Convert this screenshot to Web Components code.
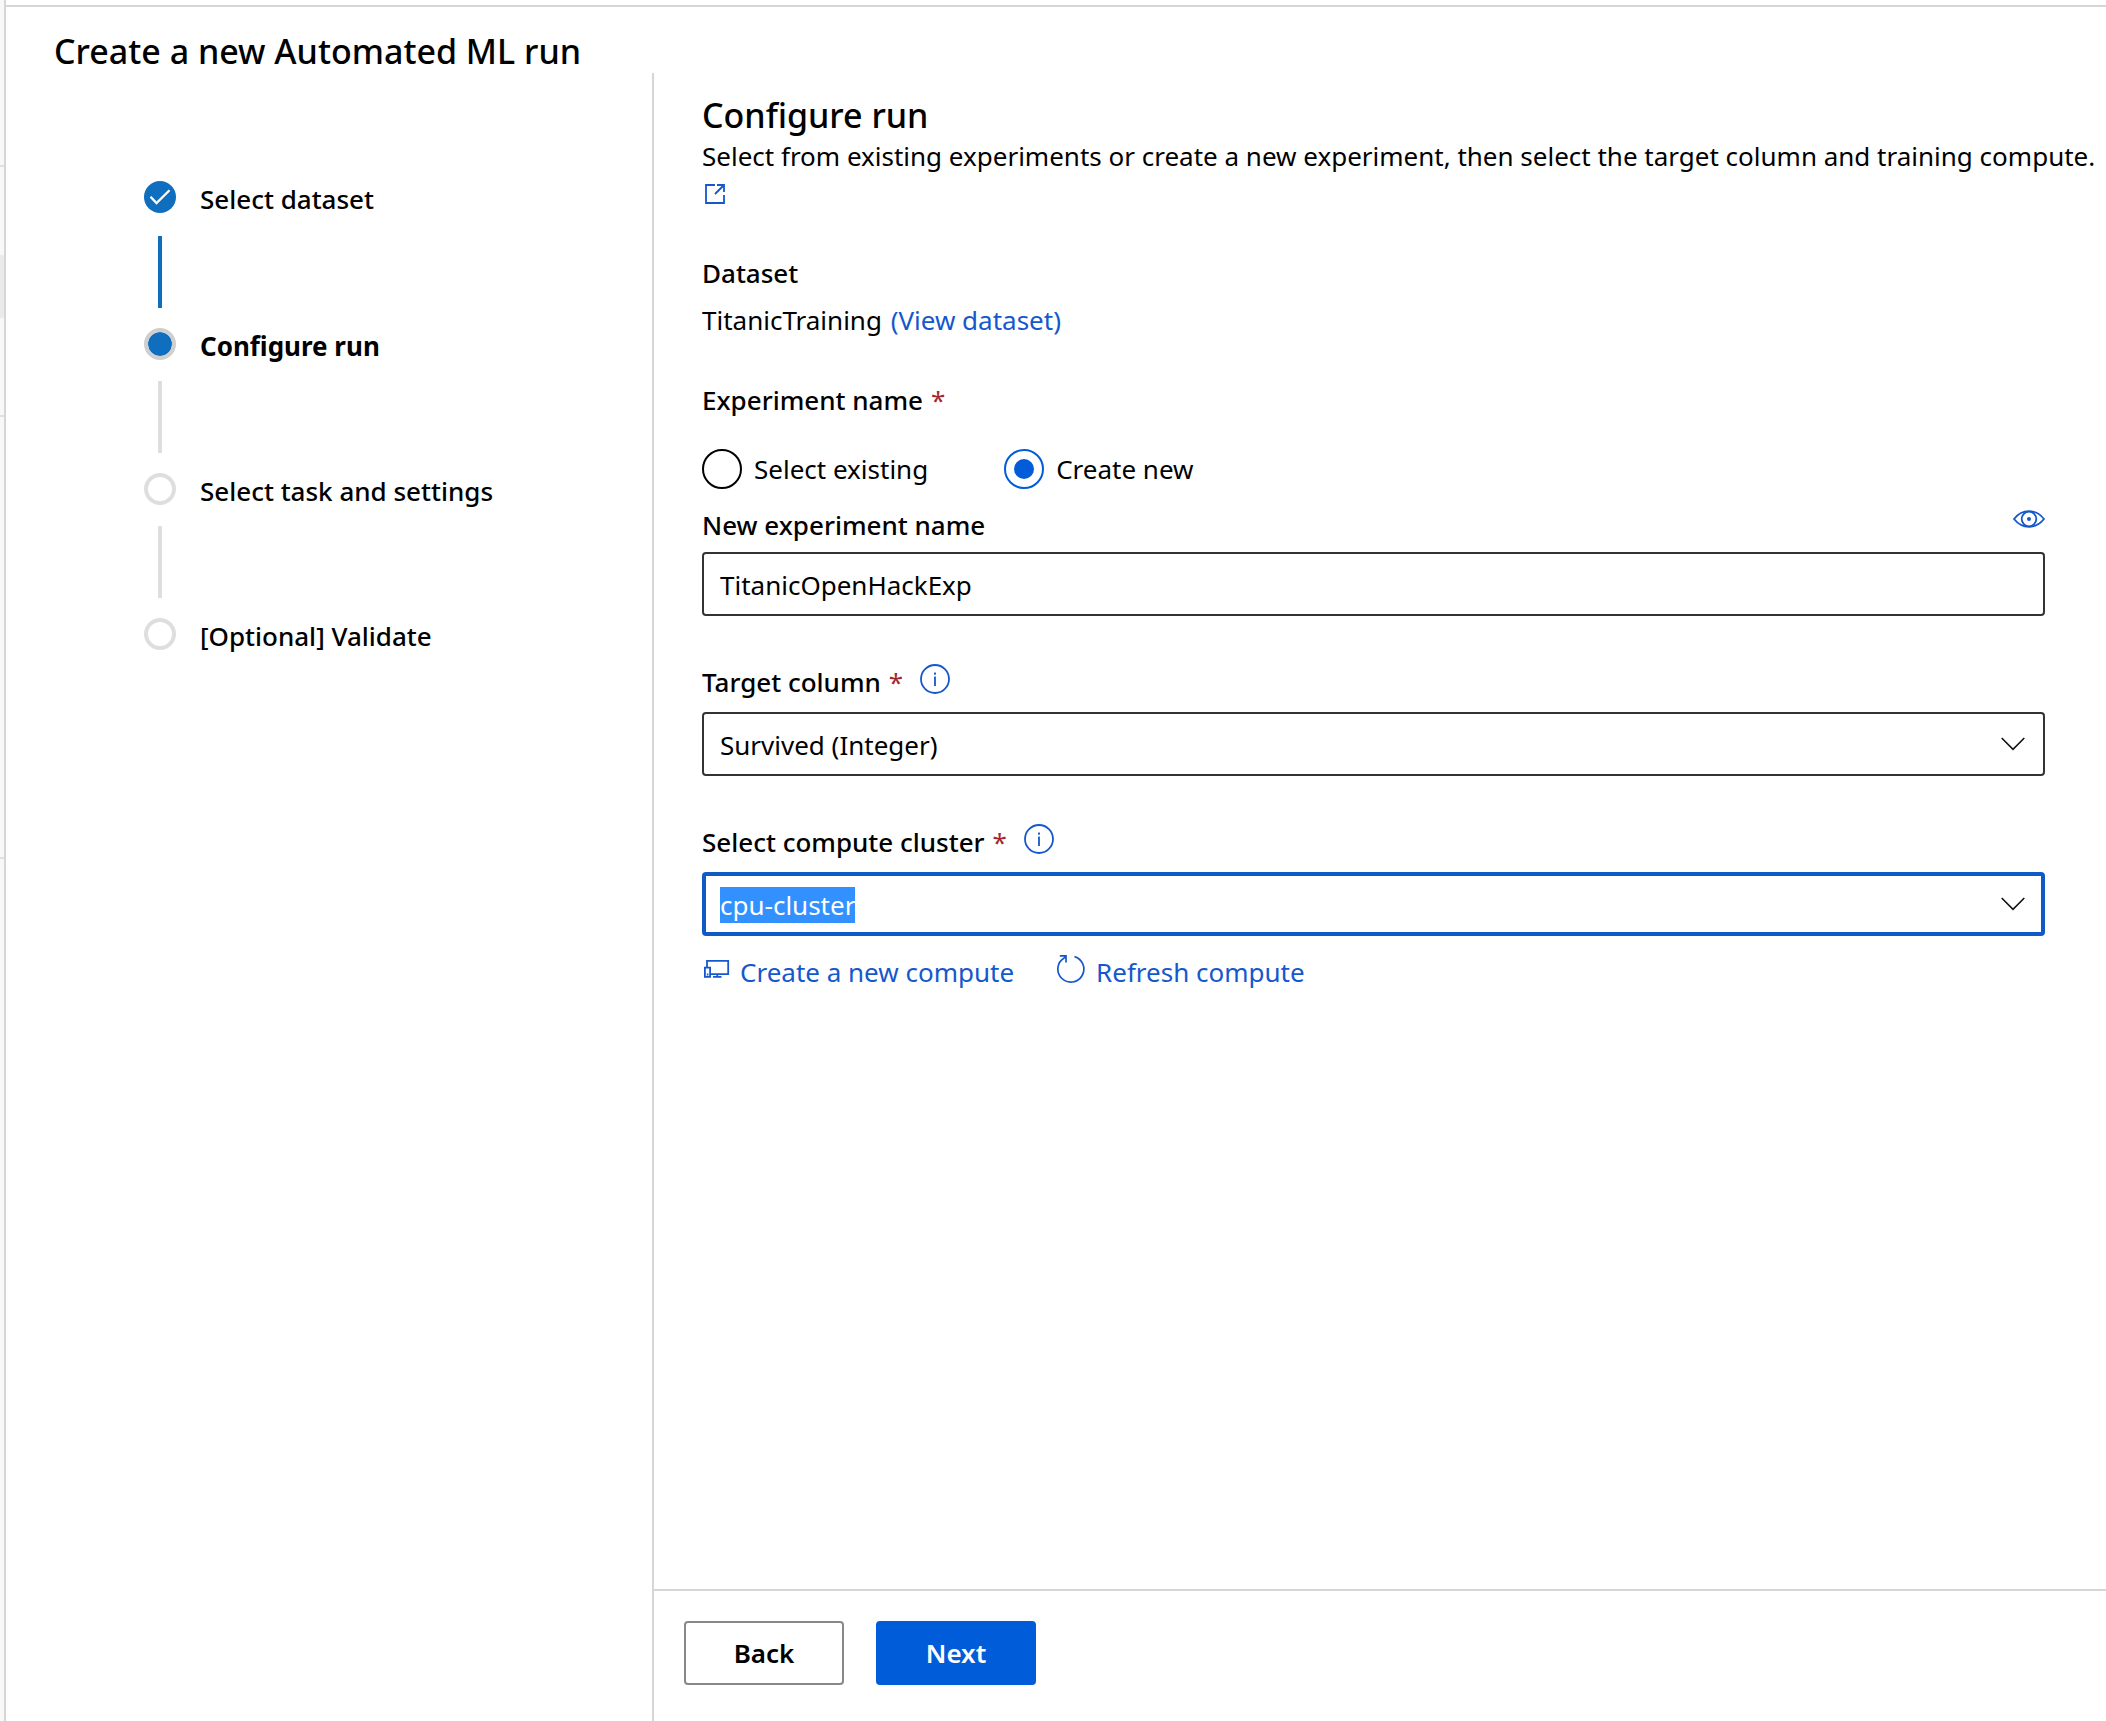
<!DOCTYPE html>
<html lang="en">
<head>
<meta charset="utf-8">
<title>Create a new Automated ML run</title>
<style>
  html, body { margin: 0; height: 100%; }
  body {
    background: #fff;
    color: #000;
    font-family: "Noto Sans", "Open Sans", sans-serif;
    font-size: 26px;
    line-height: 36px;
    --blue: #015cda;
    --link: #1558cc;
    --step: #106ebe;
    --line: #d6d6d6;
    --muted: #dedede;
    --field: #333;
    --required: #a4262c;
  }
</style>
</head>
<body>
<ml-shell>
  <ml-nav-edge slot="nav"></ml-nav-edge>
  <h1 slot="title">Create a new Automated ML run</h1>
  <ml-steps slot="steps">
    <ml-step state="done">Select dataset</ml-step>
    <ml-step state="current">Configure run</ml-step>
    <ml-step>Select task and settings</ml-step>
    <ml-step last>[Optional] Validate</ml-step>
  </ml-steps>
  <ml-run-form></ml-run-form>
  <ml-button slot="actions">Back</ml-button>
  <ml-button slot="actions" primary>Next</ml-button>
</ml-shell>

<script>
const ICONS = {
  open: '<svg width="22" height="22" viewBox="0 0 22 22"><path d="M11 2H2v18h18v-8M20 9V2h-7M20 2l-9 9"/></svg>',
  eye: '<svg width="32" height="18" viewBox="0 0 32 18"><path d="M1 9C5 4 10 1.200 16 1.200S27 4 31 9c-4 5-9 7.800-15 7.800S5 14 1 9z"/><circle cx="16" cy="9" r="7.300"/><circle cx="16" cy="9" r="2" fill="currentColor" stroke="none"/></svg>',
  info: '<svg width="30" height="30" viewBox="0 0 30 30"><circle cx="15" cy="15" r="14"/><path d="M15 12.500v9.500M15 8.500v2.200"/></svg>',
  chevron: '<svg width="24" height="14" viewBox="0 0 24 14"><path d="M.7 1L12 12.300 23.300 1" stroke-width="1.600"/></svg>',
  compute: '<svg width="28" height="20" viewBox="0 0 28 20"><path d="M5 8V1.900h21.200v13.200H8.500M2.900 8.600h5.200v9.300H2.900zM4.800 15.500h1.600M11 17.900h8.500M15.300 15.100v2.800"/></svg>',
  refresh: '<svg width="30" height="30" viewBox="0 0 30 30"><path d="M18.500 2.600A13 13 0 1 1 8.200 3.900L10 1.800M3.800 1.800H10v6.800" stroke-width="1.700"/></svg>',
  check: '<svg width="22" height="16" viewBox="0 0 22 16"><path d="M1.500 7.800l6 6.200L20.500 1.200" stroke-width="2.300"/></svg>'
};

const BASE = `
  :host { box-sizing: border-box; }
  *, *::before, *::after { box-sizing: border-box; }
  svg { display: block; flex: none; fill: none; stroke: currentColor; stroke-width: 1.800; }
  a { color: var(--link); text-decoration: none; }
`;

class MlElement extends HTMLElement {
  connectedCallback() {
    if (this.shadowRoot) return;
    this.attachShadow({ mode: 'open' });
    this.shadowRoot.innerHTML = '<style>' + BASE + this.styles() + '</style>' + this.markup();
    this.ready();
  }
  styles() { return ''; }
  markup() { return '<slot></slot>'; }
  ready() {}
}

customElements.define('ml-icon', class extends MlElement {
  styles() { return ':host { display: inline-flex; flex: none; }'; }
  markup() { return ICONS[this.getAttribute('name')]; }
});

customElements.define('ml-shell', class extends MlElement {
  styles() { return `
    :host { display: flex; min-height: 100vh; overflow-x: hidden; }
    .page { flex: 1; min-width: 0; display: flex; flex-direction: column; padding-top: 5px; }
    header { border-top: 2px solid var(--line); padding: 22px 48px 0; }
    ::slotted(h1) { margin: 0; font-size: 34px; line-height: 44px; font-weight: 500; }
    .body { flex: 1; display: flex; }
    aside { flex: none; width: 646px; padding: 108px 0 0 138px; }
    .panel { flex: 1; min-width: 0; display: flex; flex-direction: column; border-left: 2px solid var(--line); }
    main { flex: 1; padding: 20px 0 0 48px; }
    footer { display: flex; gap: 32px; padding: 30px 30px 36px; border-top: 2px solid var(--line); }
  `; }
  markup() { return `
    <slot name="nav"></slot>
    <div class="page">
      <header><slot name="title"></slot></header>
      <div class="body">
        <aside><slot name="steps"></slot></aside>
        <div class="panel">
          <main><slot></slot></main>
          <footer><slot name="actions"></slot></footer>
        </div>
      </div>
    </div>
  `; }
});

customElements.define('ml-nav-edge', class extends MlElement {
  styles() { return `
    :host { display: flex; flex-direction: column; flex: none; width: 6px; background: #f8f8f8; border-right: 2px solid var(--line); }
    i { flex: none; height: 2px; background: #e0e0e0; }
    b { flex: none; height: 63px; background: #eaeaea; border-radius: 0 2px 2px 0; }
    .first { margin-top: 165px; }
    b { margin: 88px 0 97px; }
    .last { margin-top: 440px; }
  `; }
  markup() { return '<i class="first"></i><b></b><i></i><i class="last"></i>'; }
});

customElements.define('ml-steps', class extends MlElement {
  styles() { return ':host { display: flex; flex-direction: column; }'; }
});

customElements.define('ml-step', class extends MlElement {
  styles() { return `
    :host { display: flex; gap: 24px; align-items: flex-start; font-weight: 500; }
    .track { display: flex; flex-direction: column; align-items: center; width: 32px; }
    .dot { display: flex; align-items: center; justify-content: center; width: 32px; height: 32px; border-radius: 50%; border: 4px solid var(--muted); color: #fff; }
    .bar { width: 4px; height: 72px; margin: 21px 0 20px; background: var(--muted); }
    .text { line-height: 36px; }
    ml-icon { display: none; }
    :host([state=done]) .dot { background: var(--step); border: 0; }
    :host([state=done]) ml-icon { display: flex; }
    :host([state=done]) .bar { background: var(--step); margin: 23px 0 20px; }
    :host([state=current]) { font-weight: 700; }
    :host([state=current]) .dot { background: var(--step); border-color: #cfcfcf; background-clip: padding-box; }
    :host([last]) .bar { display: none; }
  `; }
  markup() { return '<div class="track"><span class="dot"><ml-icon name="check"></ml-icon></span><span class="bar"></span></div><span class="text"><slot></slot></span>'; }
});

customElements.define('ml-button', class extends MlElement {
  styles() { return `
    :host { display: block; }
    button { display: block; width: 160px; height: 64px; padding: 0; border: 2px solid #8a8886; border-radius: 4px; background: #fff; color: #000; font: inherit; font-weight: 600; }
    :host([primary]) button { background: var(--blue); border-color: var(--blue); color: #fff; }
  `; }
  markup() { return '<button type="button"><slot></slot></button>'; }
});

customElements.define('ml-field', class extends MlElement {
  styles() { return `
    :host { display: block; }
    .head { display: flex; align-items: center; justify-content: space-between; margin-bottom: 12px; }
    .name { display: flex; align-items: center; font-weight: 500; }
    .star { color: var(--required); margin-left: 8px; font-weight: 400; }
    .name ml-icon { color: var(--link); margin: 0 0 6px 17px; }
    .head > button { padding: 0 0 10px; border: 0; background: none; color: var(--link); }
    .box { display: grid; align-items: center; }
    .box > * { grid-area: 1 / 1; }
    .box ml-icon { justify-self: end; margin-right: 20px; pointer-events: none; color: #111; }
    input, select { appearance: none; width: 100%; height: 64px; margin: 0; padding: 2px 16px 0; border: 2px solid var(--field); border-radius: 4px; background: #fff; color: #000; font: inherit; outline: none; }
    :host([tight]) .head { margin-bottom: 9px; }
    :host([active]) input { border: 4px solid #0f5bc5; padding: 2px 14px 0; }
    ::selection { background: #3390ff; color: #fff; }
  `; }
  markup() {
    const kind = this.getAttribute('kind');
    const value = this.getAttribute('value');
    const control = kind === 'select'
      ? `<select id="c"><option>${value}</option></select>`
      : `<input id="c" type="text" value="${value}"${kind === 'combo' ? ' role="combobox" aria-expanded="false"' : ''}>`;
    return `
      <div class="head">
        <span class="name"><label for="c">${this.getAttribute('label')}</label>${this.hasAttribute('required') ? '<span class="star">*</span><ml-icon name="info"></ml-icon>' : ''}</span>
        ${this.hasAttribute('preview') ? '<button type="button" aria-label="Preview"><ml-icon name="eye"></ml-icon></button>' : ''}
      </div>
      <div class="box">${control}${kind === 'text' ? '' : '<ml-icon name="chevron"></ml-icon>'}</div>`;
  }
  ready() {
    if (this.hasAttribute('active')) {
      const input = this.shadowRoot.querySelector('input');
      input.focus();
      input.select();
    }
  }
});

customElements.define('ml-run-form', class extends MlElement {
  styles() { return `
    :host { display: block; }
    h2 { margin: 0; font-size: 34px; line-height: 44px; font-weight: 500; }
    h3, legend { margin: 0; padding: 0; font-size: 26px; line-height: 36px; font-weight: 500; }
    p { margin: 0; }
    .intro { line-height: 38px; }
    .intro a { display: flex; align-items: center; height: 38px; padding-left: 2px; }
    h3 { margin: 42px 0 11px; }
    .dataset a { margin-left: 2px; }
    fieldset { margin: 44px 0 18px; padding: 0; border: 0; }
    .star { color: var(--required); margin-left: 8px; font-weight: 400; }
    .radios { display: flex; gap: 76px; margin-top: 31px; }
    .radios label { display: flex; align-items: center; gap: 12px; height: 40px; }
    input { appearance: none; width: 40px; height: 40px; margin: 0; border: 2px solid #000; border-radius: 50%; display: grid; place-items: center; }
    input:checked { border-color: var(--blue); }
    input:checked::before { content: ""; width: 20px; height: 20px; border-radius: 50%; background: var(--blue); }
    .fields { display: flex; flex-direction: column; gap: 48px; padding-right: 61px; }
    .links { display: flex; gap: 42px; margin-top: 18px; }
    .links a { display: flex; align-items: center; gap: 10px; }
    .links ml-icon { margin-bottom: 6px; }
  `; }
  markup() { return `
    <h2>Configure run</h2>
    <p class="intro">Select from existing experiments or create a new experiment, then select the target column and training compute. <a href="#" aria-label="Learn more"><ml-icon name="open"></ml-icon></a></p>
    <h3>Dataset</h3>
    <p class="dataset">TitanicTraining <a href="#">(View dataset)</a></p>
    <fieldset>
      <legend>Experiment name<span class="star">*</span></legend>
      <div class="radios">
        <label><input type="radio" name="exp">Select existing</label>
        <label><input type="radio" name="exp" checked>Create new</label>
      </div>
    </fieldset>
    <div class="fields">
      <ml-field kind="text" label="New experiment name" value="TitanicOpenHackExp" preview tight></ml-field>
      <ml-field kind="select" label="Target column" value="Survived (Integer)" required></ml-field>
      <ml-field kind="combo" label="Select compute cluster" value="cpu-cluster" required active></ml-field>
    </div>
    <div class="links">
      <a href="#"><ml-icon name="compute"></ml-icon>Create a new compute</a>
      <a href="#"><ml-icon name="refresh"></ml-icon>Refresh compute</a>
    </div>
  `; }
});
</script>
</body>
</html>
